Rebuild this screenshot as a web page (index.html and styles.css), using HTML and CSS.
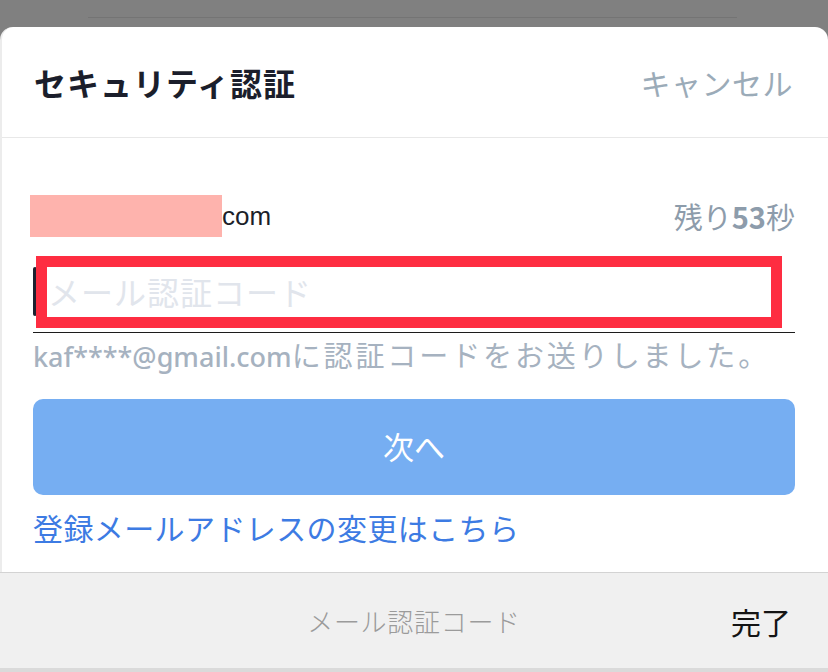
FILE: index.html
```html
<!DOCTYPE html>
<html lang="ja">
<head>
    <meta charset="UTF-8">
    <meta name="viewport" content="width=device-width, initial-scale=1.0">
    <title>セキュリティ認証</title>
    <link rel="stylesheet" href="styles.css">
</head>
<body>
    <div class="backdrop">
        <div class="backdrop-line"></div>
    </div>
    <div class="sheet">
        <div class="sheet-header">
            <h1>セキュリティ認証</h1>
            <span class="cancel">キャンセル</span>
        </div>
        <div class="sheet-body">
            <div class="account-row">
                <div class="account"><span class="masked"></span>com</div>
                <div class="timer">残り<b>53</b>秒</div>
            </div>
            <div class="code-field">
                <span class="caret"></span>
                <span class="placeholder">メール認証コード</span>
                <div class="highlight"></div>
            </div>
            <p class="hint"><b>kaf****@gmail.com</b>に認証コードをお送りしました。</p>
            <button class="next">次へ</button>
            <a class="change-link">登録メールアドレスの変更はこちら</a>
        </div>
    </div>
    <div class="toolbar">
        <span></span>
        <span class="toolbar-title">メール認証コード</span>
        <span class="done">完了</span>
    </div>
</body>
</html>
```

FILE: styles.css
```css
body {
    margin: 0;
    height: 672px;
    overflow: hidden;
    background: #808080;
    font-family: "Noto Sans CJK JP", "Noto Sans", sans-serif;
}
.backdrop {
    height: 27px;
    padding-top: 17px;
    box-sizing: border-box;
}
.backdrop-line {
    margin: 0 91px 0 88px;
    height: 1px;
    background: #747474;
}
.sheet {
    height: 545px;
    background: #fff;
    border-radius: 13px 13px 0 0;
    border-left: 2px solid #ececec;
    box-sizing: border-box;
}
.sheet-header {
    height: 111px;
    display: flex;
    align-items: center;
    justify-content: space-between;
    padding: 0 35px 0 32px;
    border-bottom: 1px solid #e8e8e8;
    box-sizing: border-box;
}
.sheet-header h1 {
    margin: 0;
    font-size: 32px;
    font-weight: 700;
    color: #1b1e2b;
    letter-spacing: 1px;
}
.cancel {
    font-size: 30px;
    color: #9babb8;
    letter-spacing: 0.5px;
}
.sheet-body {
    padding: 57px 33px 0 28px;
}
.account-row {
    height: 42px;
    display: flex;
    align-items: center;
    justify-content: space-between;
}
.account {
    display: flex;
    align-items: center;
    font-family: "Liberation Sans", Arial, sans-serif;
    font-size: 26px;
    color: #1c1f2a;
}
.masked {
    width: 192px;
    height: 42px;
    background: #feb3ad;
}
.timer {
    font-size: 29px;
    color: #8d9cab;
}
.timer b {
    font-weight: 600;
}
.code-field {
    position: relative;
    height: 82px;
    margin-top: 13px;
    margin-left: 3px;
    border-bottom: 1px solid #1c1c1c;
    display: flex;
    align-items: center;
}
.caret {
    width: 4px;
    height: 49px;
    border-radius: 2px;
    background: #1d2130;
    margin-right: 11px;
}
.placeholder {
    font-size: 32px;
    color: #e1e5ec;
    letter-spacing: 1px;
}
.highlight {
    position: absolute;
    top: 6px;
    left: 3px;
    width: 746px;
    height: 72px;
    border: 11px solid #fe2d41;
    box-sizing: border-box;
}
.hint {
    margin: 1px 0 0 3px;
    line-height: 40px;
    font-size: 29px;
    letter-spacing: 2.9px;
    color: #a6b2c0;
    white-space: nowrap;
}
.hint b {
    font-family: "Noto Sans", sans-serif;
    font-size: 27px;
    font-weight: 500;
    letter-spacing: 0;
}
.next {
    display: block;
    width: 762px;
    height: 96px;
    margin: 22px 0 0 3px;
    border: none;
    border-radius: 10px;
    background: #76aef2;
    color: #fff;
    font-family: inherit;
    font-size: 31px;
    padding-bottom: 4px;
}
.change-link {
    display: block;
    margin: 12px 0 0 3px;
    line-height: 40px;
    font-size: 30px;
    letter-spacing: 0.4px;
    color: #3d7be3;
}
.toolbar {
    height: 100px;
    display: grid;
    grid-template-columns: 1fr auto 1fr;
    align-items: center;
    background: #f0f0f0;
    border-top: 1px solid #d3d3d3;
    border-bottom: 4px solid #dadada;
    box-sizing: border-box;
    padding-right: 37px;
}
.toolbar-title {
    font-size: 26px;
    font-weight: 300;
    letter-spacing: 0.7px;
    color: #9b9b9b;
    padding-left: 37px;
}
.done {
    justify-self: end;
    font-size: 30px;
    color: #141414;
}
```
